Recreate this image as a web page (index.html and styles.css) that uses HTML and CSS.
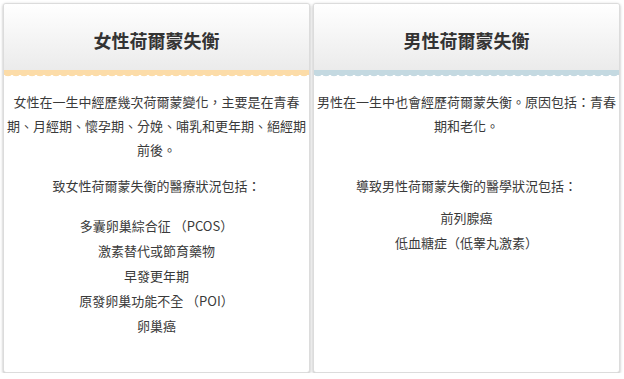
FILE: index.html
```html
<!DOCTYPE html>
<html lang="zh-Hant">
<head>
<meta charset="utf-8">
<link rel="stylesheet" href="styles.css">
</head>
<body>
<div class="cards">
  <section class="card card-female">
    <header class="card-head"><h2 class="card-title">女性荷爾蒙失衡</h2></header>
    <div class="wave"></div>
    <div class="card-body">
      <p class="intro">女性在一生中經歷幾次荷爾蒙變化，主要是在青春期、月經期、懷孕期、分娩、哺乳和更年期、絕經期前後。</p>
      <p class="lead">致女性荷爾蒙失衡的醫療狀況包括：</p>
      <ul class="items">
        <li>多囊卵巢綜合征 （PCOS）</li>
        <li>激素替代或節育藥物</li>
        <li>早發更年期</li>
        <li>原發卵巢功能不全 （POI）</li>
        <li>卵巢癌</li>
      </ul>
    </div>
  </section>
  <section class="card card-male">
    <header class="card-head"><h2 class="card-title">男性荷爾蒙失衡</h2></header>
    <div class="wave"></div>
    <div class="card-body">
      <p class="intro">男性在一生中也會經歷荷爾蒙失衡。原因包括：青春期和老化。</p>
      <p class="lead">導致男性荷爾蒙失衡的醫學狀況包括：</p>
      <ul class="items">
        <li>前列腺癌</li>
        <li>低血糖症（低睾丸激素）</li>
      </ul>
    </div>
  </section>
</div>
</body>
</html>
```
FILE: styles.css
```css
html, body {
  margin: 0;
  padding: 0;
  background: #fff;
}
body {
  padding: 3px 4px 0 3px;
  font-family: "Noto Sans CJK JP", "Noto Sans CJK TC", "Noto Sans", sans-serif;
  color: #3a3a3a;
  font-size: 13px;
}
.cards {
  display: flex;
  gap: 3px;
}
.card {
  width: 307px;
  height: 370px;
  box-sizing: border-box;
  border: 1px solid #dcdcdc;
  border-radius: 3px;
  box-shadow: 0 1px 3px rgba(0,0,0,0.3);
  background: #fff;
  display: flex;
  flex-direction: column;
  overflow: hidden;
}
.card-head {
  height: 66px;
  box-sizing: border-box;
  padding-top: 6px;
  display: flex;
  align-items: center;
  justify-content: center;
  background: linear-gradient(#ffffff, #ebebeb);
}
.card-title {
  margin: 0;
  font-family: "Noto Sans CJK TC", sans-serif;
  font-size: 18px;
  font-weight: 700;
  line-height: 24px;
  color: #333;
}
.wave {
  height: 7px;
  background-repeat: repeat-x;
  background-size: 8px 7px;
}
.card-female .wave {
  background-image: radial-gradient(circle at 4px 1px, #fcdca8 5px, rgba(252,220,168,0) 5.6px);
}
.card-male .wave {
  background-image: radial-gradient(circle at 4px 1px, #c4d9e1 5px, rgba(196,217,225,0) 5.6px);
}
.card-body {
  padding: 13px 3px 0;
  text-align: center;
}
.intro {
  margin: 0;
  line-height: 24px;
}
.lead {
  margin: 0;
  line-height: 24px;
}
.card-female .lead { margin-top: 12px; }
.card-male .lead { margin-top: 36px; }
.items {
  list-style: none;
  margin: 0;
  padding: 0;
  line-height: 25px;
}
.card-female .items { margin-top: 15px; }
.card-male .items { margin-top: 7px; }
```
